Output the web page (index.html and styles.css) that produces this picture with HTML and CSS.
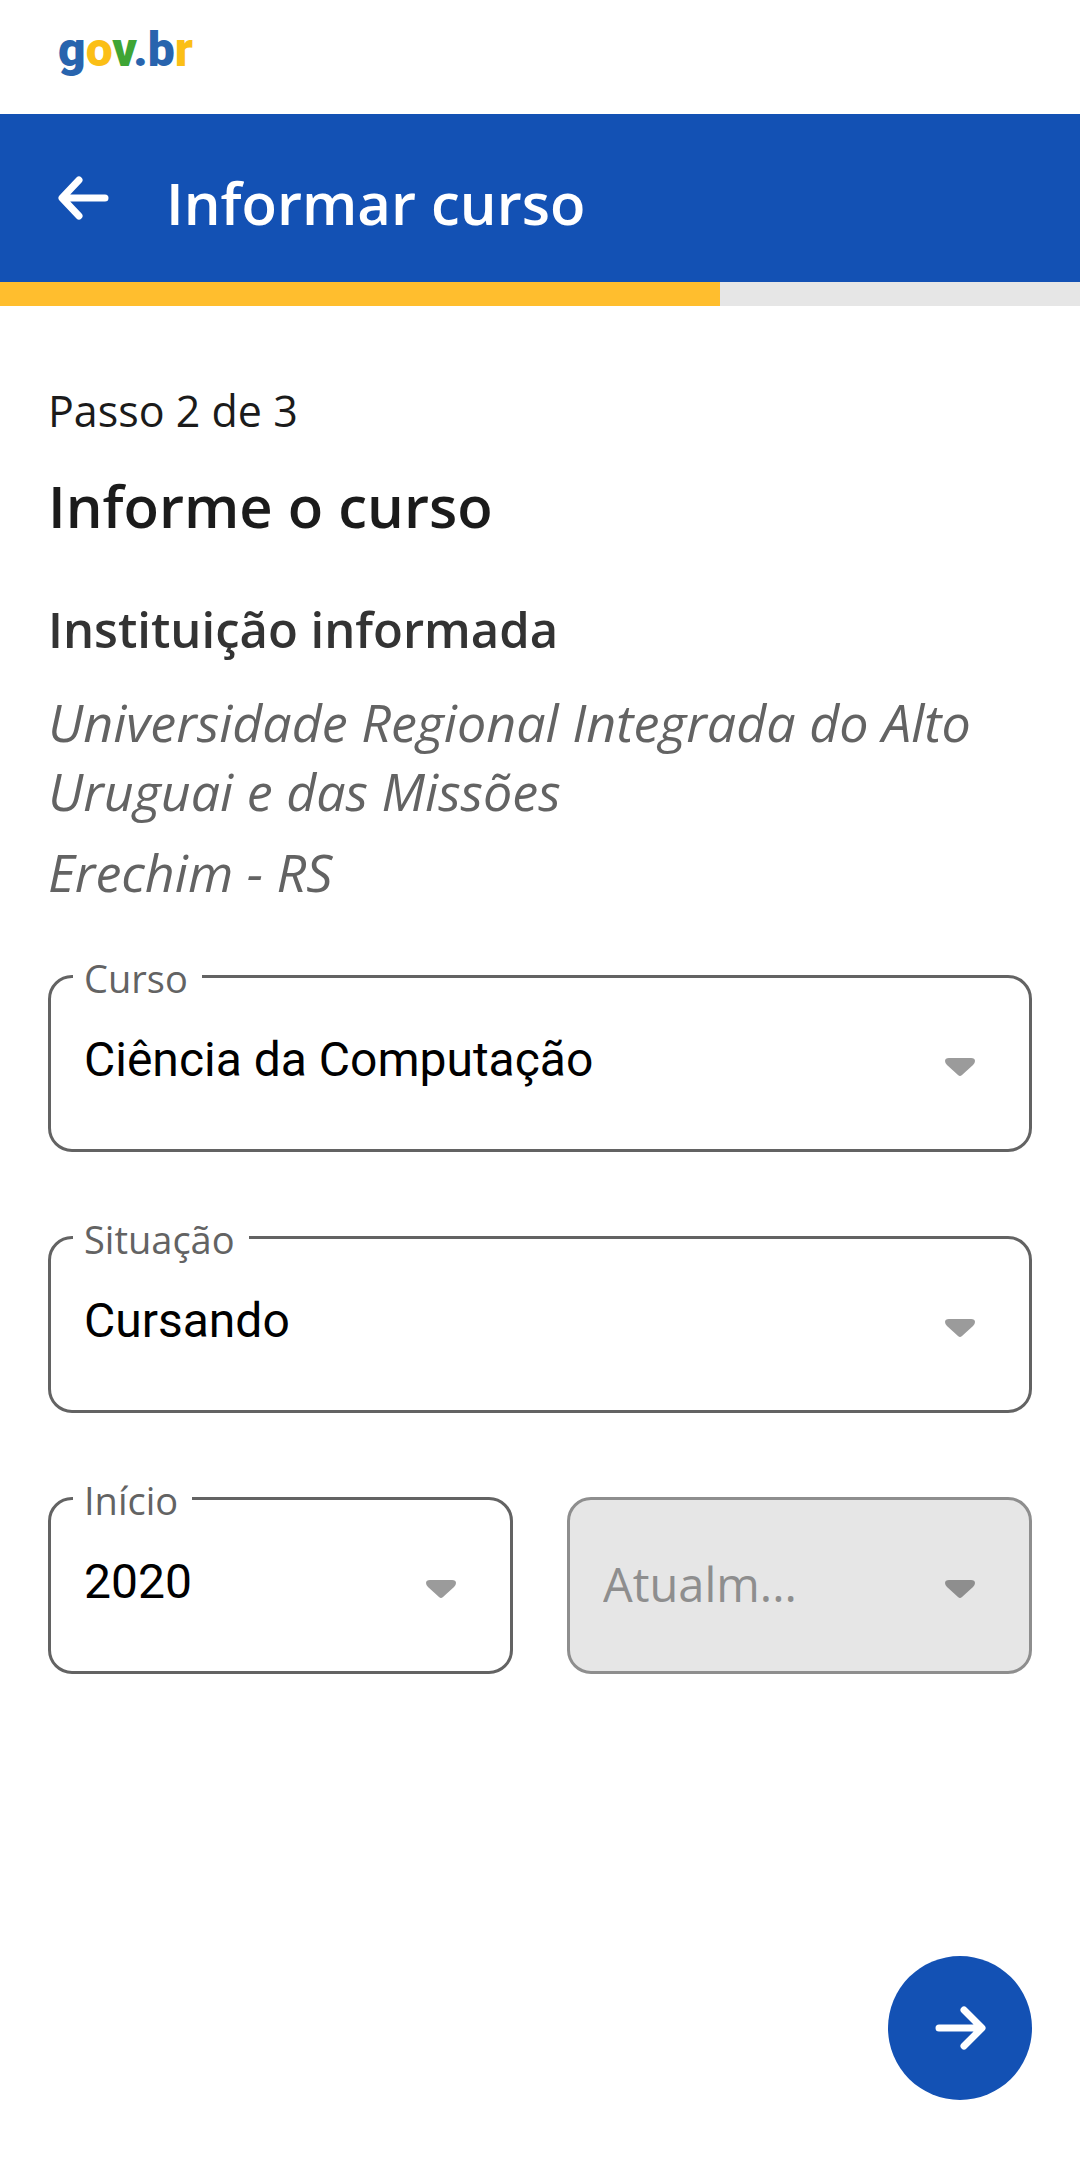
FILE: index.html
```
<!DOCTYPE html>
<html lang="pt-BR">
<head>
  <meta charset="utf-8">
  <meta name="viewport" content="width=device-width, initial-scale=1">
  <title>Informar curso</title>
  <link rel="stylesheet" href="styles.css">
</head>
<body>
  <div class="brand">
    <span class="logo"><span class="blue">g</span><span class="yellow">o</span><span class="green">v</span><span class="blue">.b</span><span class="yellow">r</span></span>
  </div>

  <header class="app-bar">
    <button class="back" type="button" aria-label="Voltar">
      <svg class="arrow" viewBox="0 0 52 44" aria-hidden="true"><path d="M47 22H5M21 4L4 22L21 40"/></svg>
    </button>
    <h1 class="app-title">Informar curso</h1>
  </header>
  <progress class="progress" value="2" max="3" aria-label="Progresso"></progress>

  <main class="content">
    <p class="step">Passo 2 de 3</p>
    <h2 class="heading">Informe o curso</h2>
    <h3 class="subheading">Instituição informada</h3>
    <p class="institution">Universidade Regional Integrada do Alto Uruguai e das Missões</p>
    <p class="institution">Erechim - RS</p>

    <form class="form" id="course-form">
      <div class="field">
        <label class="field-label" for="curso">Curso</label>
        <select class="field-select" id="curso"><option>Ciência da Computação</option></select>
        <svg class="caret" viewBox="0 0 30 18" aria-hidden="true"><path d="M4 0H26Q30 0 30 3Q30 5 28 7L17 17Q15 19 13 17L2 7Q0 5 0 3Q0 0 4 0Z"/></svg>
      </div>
      <div class="field">
        <label class="field-label" for="situacao">Situação</label>
        <select class="field-select" id="situacao"><option>Cursando</option></select>
        <svg class="caret" viewBox="0 0 30 18" aria-hidden="true"><path d="M4 0H26Q30 0 30 3Q30 5 28 7L17 17Q15 19 13 17L2 7Q0 5 0 3Q0 0 4 0Z"/></svg>
      </div>
      <div class="period">
        <div class="field">
          <label class="field-label" for="inicio">Início</label>
          <select class="field-select" id="inicio"><option>2020</option></select>
          <svg class="caret" viewBox="0 0 30 18" aria-hidden="true"><path d="M4 0H26Q30 0 30 3Q30 5 28 7L17 17Q15 19 13 17L2 7Q0 5 0 3Q0 0 4 0Z"/></svg>
        </div>
        <div class="field field-disabled">
          <select class="field-select" id="termino" aria-label="Término" disabled><option>Atualm...</option></select>
          <svg class="caret" viewBox="0 0 30 18" aria-hidden="true"><path d="M4 0H26Q30 0 30 3Q30 5 28 7L17 17Q15 19 13 17L2 7Q0 5 0 3Q0 0 4 0Z"/></svg>
        </div>
      </div>
    </form>

    <button class="next" type="submit" form="course-form" aria-label="Avançar">
      <svg class="arrow" viewBox="0 0 52 44" aria-hidden="true"><path d="M5 22H47M30 4L48 22L30 40"/></svg>
    </button>
  </main>
</body>
</html>
```
FILE: styles.css
```
* {
  box-sizing: border-box;
}

body {
  margin: 0;
  min-height: 100vh;
  display: flex;
  flex-direction: column;
  background: #fff;
  color: #1b1b1b;
  font-family: "Open Sans", sans-serif;
}

h1, h2, h3, p {
  margin: 0;
}

/* Brand strip */
.brand {
  height: 114px;
  padding: 20px 58px;
}

.logo {
  display: block;
  font: 900 48px/60px Roboto, sans-serif;
}

.blue { color: #2864ae; }
.yellow { color: #fbbf16; }
.green { color: #3fa535; }

/* Title bar */
.app-bar {
  display: flex;
  align-items: center;
  gap: 56px;
  height: 168px;
  padding: 0 58px;
  background: #1351b4;
  color: #fff;
}

.back {
  display: flex;
  padding: 0;
  border: 0;
  background: none;
  color: inherit;
}

.arrow {
  width: 52px;
  height: 44px;
  fill: none;
  stroke: currentColor;
  stroke-width: 7px;
  stroke-linecap: round;
  stroke-linejoin: round;
}

.app-title {
  padding-top: 10px;
  font-size: 58px;
  font-weight: 600;
  line-height: 80px;
}

.progress {
  display: block;
  width: 100%;
  height: 24px;
  border: 0;
  appearance: none;
  background: #e6e6e6;
}

.progress::-webkit-progress-bar {
  background: #e6e6e6;
}

.progress::-webkit-progress-value {
  background: #ffbe2e;
}

/* Page content */
.content {
  flex: 1;
  display: flex;
  flex-direction: column;
  padding: 75px 48px 66px;
}

.step {
  font-size: 43px;
  line-height: 60px;
}

.heading {
  margin-top: 25px;
  font-size: 58px;
  font-weight: 600;
  line-height: 80px;
}

.subheading {
  margin-top: 49px;
  color: #333;
  font-size: 49px;
  font-weight: 600;
  line-height: 69px;
}

.institution {
  margin-top: 12px;
  color: #636363;
  font-size: 52px;
  font-style: italic;
  line-height: 69px;
}

.subheading + .institution {
  margin-top: 23px;
}

/* Form */
.form {
  display: flex;
  flex-direction: column;
  gap: 84px;
  margin-top: 69px;
}

.period {
  display: grid;
  grid-template-columns: 1fr 1fr;
  gap: 54px;
}

.field {
  position: relative;
}

.field-label {
  position: absolute;
  top: -23px;
  left: 25px;
  padding: 0 14px 0 11px;
  background: #fff;
  color: #636363;
  font-size: 38px;
  line-height: 52px;
}

.field-select {
  display: block;
  width: 100%;
  height: 177px;
  padding: 0 100px 8px 33px;
  border: 3px solid #636363;
  border-radius: 24px;
  appearance: none;
  background: #fff;
  color: #000;
  font: 48px Roboto, sans-serif;
}

.field-disabled .field-select {
  padding-bottom: 4px;
  border-color: #8e8e8e;
  background: #e6e6e6;
  color: #8e8e8e;
  font: 47px "Open Sans", sans-serif;
  opacity: 1;
}

.caret {
  position: absolute;
  top: 83px;
  right: 57px;
  width: 30px;
  height: 18px;
  fill: #9b9b9b;
  pointer-events: none;
}

.field-disabled .caret {
  fill: #8e8e8e;
}

/* Floating action */
.next {
  display: flex;
  align-items: center;
  justify-content: center;
  align-self: flex-end;
  width: 144px;
  height: 144px;
  margin-top: auto;
  padding: 0;
  border: 0;
  border-radius: 50%;
  background: #1351b4;
  color: #fff;
}
```
